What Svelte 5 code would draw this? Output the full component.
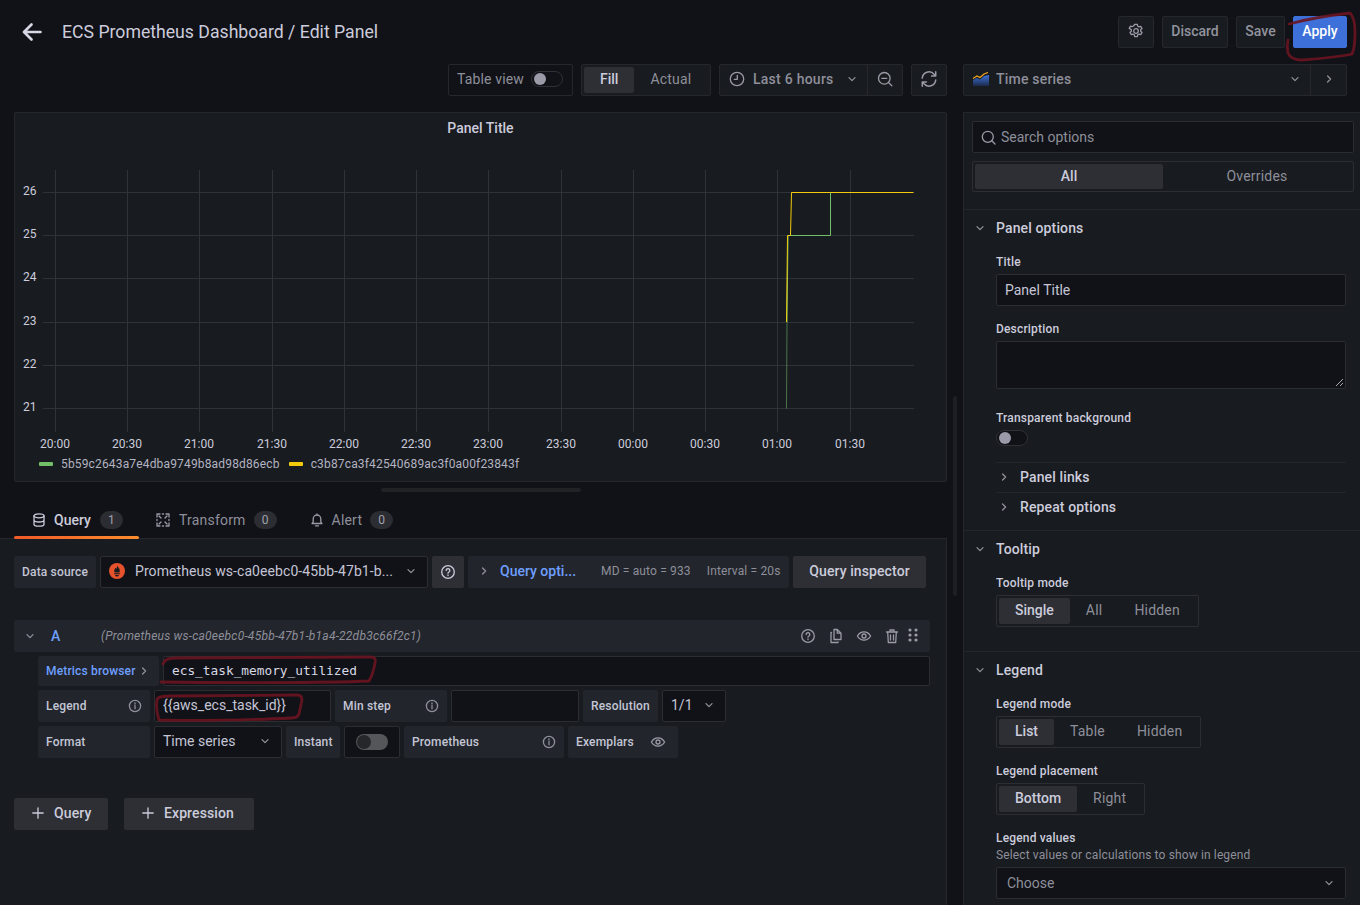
<script>
  const yTicks = [[26,192],[25,235],[24,278],[23,322],[22,365],[21,408]];
  const xTicks = [['20:00',55],['20:30',127],['21:00',199],['21:30',272],['22:00',344],['22:30',416],['23:00',488],['23:30',561],['00:00',633],['00:30',705],['01:00',777],['01:30',850]];
</script>

{#snippet down()}
  <svg class="ico chev" width="10" height="10" viewBox="0 0 10 10"><path d="M2 3.600 5 6.600l3-3" /></svg>
{/snippet}
{#snippet right()}
  <svg class="ico chev" width="10" height="10" viewBox="0 0 10 10"><path d="M3.600 2 6.600 5l-3 3" /></svg>
{/snippet}
{#snippet info()}
  <svg class="ico info" width="14" height="14" viewBox="0 0 14 14"><circle cx="7" cy="7" r="5.600"/><path d="M7 6.400v3.400M7 4v.9" /></svg>
{/snippet}
{#snippet help()}
  <svg class="ico" width="16" height="16" viewBox="0 0 16 16"><circle cx="8" cy="8" r="6.300"/><path d="M6.200 6.400a1.800 1.800 0 1 1 2.700 1.600c-.6.300-.9.700-.9 1.200M8 10.900v.7"/></svg>
{/snippet}
{#snippet eye(size)}
  <svg class="ico" width={size} height={size} viewBox="0 0 16 16"><path d="M1.400 8C3 5.300 5.300 3.900 8 3.900s5 1.400 6.600 4.100C13 10.700 10.700 12.100 8 12.100S3 10.700 1.400 8Z"/><circle cx="8" cy="8" r="2"/></svg>
{/snippet}
{#snippet refresh()}
  <svg class="ico" width="18" height="18" viewBox="0 0 16 16"><path d="M2 7.200A6 6 0 0 1 12.500 3.700L14 5.200M14 1.500v3.800h-3.700M14 8.800A6 6 0 0 1 3.500 12.300L2 10.800M2 14.500v-3.800h3.700"/></svg>
{/snippet}

<div class="page">
  <header class="top">
    <div class="title-wrap">
      <svg class="back" width="20" height="18" viewBox="0 0 20 18"><path d="M18.500 9H2.500M9.500 1.500 2 9l7.500 7.500" /></svg>
      <h1>ECS Prometheus Dashboard / Edit Panel</h1>
    </div>
    <div class="top-actions">
      <button class="tb square">
        <svg class="ico" width="16" height="16" viewBox="0 0 16 16"><circle cx="8" cy="8" r="2.300"/><path d="M6.700 1.400h2.600l.4 1.800 1.300.7 1.700-.6 1.300 2.300-1.300 1.200v1.400l1.300 1.200-1.300 2.300-1.700-.6-1.300.7-.4 1.800H6.700l-.4-1.800-1.300-.7-1.700.6-1.300-2.300 1.300-1.200V6.600L1.200 5.400l1.300-2.300 1.700.6 1.300-.7Z"/></svg>
      </button>
      <button class="tb discard">Discard</button>
      <button class="tb save">Save</button>
      <button class="tb apply">Apply</button>
    </div>
  </header>

  <div class="columns">
    <div class="left">
      <div class="toolbar">
        <div class="tool-box table-view">
          <span>Table view</span>
          <span class="switch"><i></i></span>
        </div>
        <div class="seg fill-seg">
          <span class="on">Fill</span><span>Actual</span>
        </div>
        <div class="tool-box time-box">
          <div class="time">
            <svg class="ico" width="16" height="16" viewBox="0 0 16 16"><circle cx="8" cy="8" r="6.700"/><path d="M8.300 4.300V8.300H5.300"/></svg>
            <span>Last 6 hours</span>
            {@render down()}
          </div>
          <div class="zoom">
            <svg class="ico" width="16" height="16" viewBox="0 0 16 16"><circle cx="7.300" cy="7.300" r="5.800"/><path d="M4.800 7.300h5M11.500 11.500l3.300 3.300"/></svg>
          </div>
        </div>
        <button class="tb square refresh">{@render refresh()}</button>
      </div>

      <section class="panel">
        <div class="panel-title">Panel Title</div>
        <svg class="chart" viewBox="15 145 931 311" width="931" height="311">
          {#each xTicks as [, x]}
            <line x1={x + .5} x2={x + .5} y1="170" y2="432" class="grid" />
          {/each}
          {#each yTicks as [, y]}
            <line x1="43" x2="914" y1={y + .5} y2={y + .5} class="grid" />
          {/each}
          {#each yTicks as [label, y]}
            <text x="23" y={y + 3}>{label}</text>
          {/each}
          {#each xTicks as [label, x]}
            <text x={x} y="448" text-anchor="middle">{label}</text>
          {/each}
          <path d="M786.500 408.500 787 322" class="s-green dim" />
          <path d="M787 322 788 235.500H830.500V192.500" class="s-green" />
          <path d="M786.500 322 787.500 235.500H790.500L791.500 192.500H913.500" class="s-yellow" />
        </svg>
        <div class="legend">
          <span class="mark green"></span><span class="series-name">5b59c2643a7e4dba9749b8ad98d86ecb</span>
          <span class="mark yellow"></span><span>c3b87ca3f42540689ac3f0a00f23843f</span>
        </div>
      </section>

      <div class="handle"></div>

      <nav class="tabs">
        <div class="tab active">
          <svg class="ico bright" width="14" height="14" viewBox="0 0 14 14"><ellipse cx="7" cy="2.800" rx="5" ry="2"/><path d="M2 2.800v8.400c0 1.100 2.200 2 5 2s5-.9 5-2V2.800M2 7c0 1.100 2.200 2 5 2s5-.9 5-2"/></svg>
          <b>Query</b><em>1</em>
        </div>
        <div class="tab transform">
          <svg class="ico" width="14" height="14" viewBox="0 0 14 14"><path d="M1 4V1h3M10 1h3v3M13 10v3h-3M4 13H1v-3M6.500 1h1M1 6.500v1M13 6.500v1M6.500 13h1M3 3l2 2M11 3 9 5M11 11 9 9M3 11l2-2"/></svg>
          <span>Transform</span><em>0</em>
        </div>
        <div class="tab alert">
          <svg class="ico" width="14" height="14" viewBox="0 0 14 14"><path d="M2 10.500h10l-1.200-1.700V5.800a3.800 3.800 0 0 0-7.600 0v3ZM5.500 12.800h3M7 1v1"/></svg>
          <span>Alert</span><em>0</em>
        </div>
      </nav>

      <section class="query-area">
        <div class="ds-row">
          <div class="lbl ds-label">Data source</div>
          <div class="field ds-select">
            <svg width="16" height="16" viewBox="0 0 16 16"><circle cx="8" cy="8" r="8" fill="#e6522c"/><path d="M8 2.500c.5 1.500 2.800 2.700 2.800 5.200 0 .7-.2 1.300-.5 1.800H5.700c-.3-.5-.5-1.100-.5-1.800 0-1.300 1-1.800 1.100-3 .6.300.9.800 1 1.300C7.800 5.200 8.200 3.900 8 2.500ZM5.200 10.300h5.600v1H5.200ZM6 12h4c-.2.900-1 1.500-2 1.500s-1.800-.6-2-1.500Z" fill="#181b1f"/></svg>
            <span class="ds-name">Prometheus ws-ca0eebc0-45bb-47b1-b...</span>
            {@render down()}
          </div>
          <button class="grey help-btn">{@render help()}</button>
          <div class="opts">
            {@render right()}
            <span class="opts-link">Query opti...</span>
            <span class="opts-meta md">MD = auto = 933</span>
            <span class="opts-meta">Interval = 20s</span>
          </div>
          <button class="grey inspector">Query inspector</button>
        </div>

        <div class="q-head">
          {@render down()}
          <span class="q-letter">A</span>
          <span class="q-ds">(Prometheus ws-ca0eebc0-45bb-47b1-b1a4-22db3c66f2c1)</span>
          <span class="q-icons">
            {@render help()}
            <svg class="ico" width="16" height="16" viewBox="0 0 16 16"><path d="M6 1.500h3.300L13 5.200v6.300H6ZM9.200 1.500v3.700H13M3.500 4.500H3v10h7v-.6"/></svg>
            {@render eye(16)}
            <svg class="ico" width="16" height="16" viewBox="0 0 16 16"><path d="M2.500 4h11M6 4V2h4v2M3.700 4l.6 10.500h7.400L12.300 4M6.500 7v5M9.500 7v5"/></svg>
            <svg class="dots" width="10" height="14" viewBox="0 0 10 14"><g fill="#9a9ba6"><circle cx="2" cy="2" r="1.600"/><circle cx="8" cy="2" r="1.600"/><circle cx="2" cy="7" r="1.600"/><circle cx="8" cy="7" r="1.600"/><circle cx="2" cy="12" r="1.600"/><circle cx="8" cy="12" r="1.600"/></g></svg>
          </span>
        </div>

        <div class="q-grid">
          <div class="line metric-line">
            <div class="lbl link w121">Metrics browser {@render right()}</div>
            <div class="field code">ecs_task_memory_utilized</div>
          </div>
          <div class="line legend-line">
            <div class="lbl w112 spread">Legend {@render info()}</div>
            <div class="field w177 plain">{'{{aws_ecs_task_id}}'}</div>
            <div class="lbl w112 spread">Min step {@render info()}</div>
            <div class="field w128"></div>
            <div class="lbl w75">Resolution</div>
            <div class="field w64 plain spread">1/1 {@render down()}</div>
          </div>
          <div class="line format-line">
            <div class="lbl w112">Format</div>
            <div class="field w128 plain spread">Time series {@render down()}</div>
            <div class="lbl w54">Instant</div>
            <div class="field w56 center"><span class="switch2"><i></i></span></div>
            <div class="lbl w160 spread">Prometheus {@render info()}</div>
            <div class="lbl w110 spread exemplars">Exemplars {@render eye(16)}</div>
          </div>
        </div>

        <div class="add-row">
          <button class="grey add add-q"><svg class="ico bright" width="12" height="12" viewBox="0 0 12 12"><path d="M6 .8v10.400M.8 6h10.400"/></svg>Query</button>
          <button class="grey add add-e"><svg class="ico bright" width="12" height="12" viewBox="0 0 12 12"><path d="M6 .8v10.400M.8 6h10.400"/></svg>Expression</button>
        </div>
      </section>
    </div>

    <div class="right">
      <div class="viz-row">
        <div class="viz">
          <svg width="18" height="14" viewBox="0 0 18 14"><defs><linearGradient id="vg" x1="0" y1="0" x2="0" y2="1"><stop offset="0" stop-color="#3d71d9"/><stop offset="1" stop-color="#1b2a4a"/></linearGradient></defs><path d="M1 8 5 6l3 1.500L12 4l5-1v11H1Z" fill="url(#vg)"/><path d="M1 6.500 5 4l3 1.500L12 2l4-1.500" fill="none" stroke="#f2a71e" stroke-width="1.200"/></svg>
          <span>Time series</span>
          {@render down()}
        </div>
        <div class="viz-next">{@render right()}</div>
      </div>

      <aside class="side">
        <div class="side-top">
          <div class="search">
            <svg class="ico" width="15" height="15" viewBox="0 0 15 15"><circle cx="6.800" cy="6.800" r="5.500"/><path d="m10.800 10.800 3.200 3.200"/></svg>
            <span>Search options</span>
          </div>
          <div class="seg all-seg"><span class="on">All</span><span>Overrides</span></div>
        </div>

        <div class="opt-section s-panel">
          <div class="sec-head">{@render down()}<span>Panel options</span></div>
          <div class="sec-body">
            <div class="f-label">Title</div>
            <div class="s-input">Panel Title</div>
            <div class="f-label l-desc">Description</div>
            <div class="s-area">
              <svg class="grip" width="9" height="9" viewBox="0 0 9 9"><path d="M1 8 8 1M5 8l3-3" stroke="#aaa" fill="none"/></svg>
            </div>
            <div class="f-label l-trans">Transparent background</div>
            <span class="switch side-switch"><i></i></span>
            <div class="sub first">{@render right()}<span>Panel links</span></div>
            <div class="sub">{@render right()}<span>Repeat options</span></div>
          </div>
        </div>

        <div class="opt-section s-tooltip">
          <div class="sec-head">{@render down()}<span>Tooltip</span></div>
          <div class="sec-body">
            <div class="f-label">Tooltip mode</div>
            <div class="seg side-seg"><span class="on">Single</span><span>All</span><span>Hidden</span></div>
          </div>
        </div>

        <div class="opt-section s-legend">
          <div class="sec-head">{@render down()}<span>Legend</span></div>
          <div class="sec-body">
            <div class="f-label">Legend mode</div>
            <div class="seg side-seg"><span class="on">List</span><span>Table</span><span>Hidden</span></div>
            <div class="f-label l-next">Legend placement</div>
            <div class="seg side-seg"><span class="on">Bottom</span><span>Right</span></div>
            <div class="f-label l-next">Legend values</div>
            <div class="f-desc">Select values or calculations to show in legend</div>
            <div class="s-input choose"><span>Choose</span>{@render down()}</div>
          </div>
        </div>
      </aside>
    </div>
  </div>

  <div class="scroll-thumb"></div>

  <svg class="ink" width="1360" height="905" viewBox="0 0 1360 905">
    <path d="M1289 24c18-5 44-9 61-11 3 3 5 10 5 19 0 10-1 18-3 22-14 3-36 5-50 6-7 0-12-2-14-7-1-4-1-9 0-13"/>
    <path d="M163 664c1-4 5-6 12-6l195-1c5 0 6 2 5 6-1 6-3 13-6 18-45 2-150 2-208 1"/>
    <path d="M157 700c0-3 6-4 14-4l126-1c4 0 5 2 5 5l-3 14c-1 3-4 4-8 4-35 2-100 3-132 2-2-6-3-14-2-20Z"/>
  </svg>
</div>

<style>
  :global(body) { margin: 0; background: #111217; }
  .page {
    position: relative;
    width: 1360px;
    height: 905px;
    overflow: hidden;
    background: #111217;
    color: #ccccdc;
    font-family: Roboto, "Liberation Sans", sans-serif;
    font-size: 14px;
  }
  button { font: inherit; cursor: pointer; }
  .ico { fill: none; stroke: #9a9ba6; stroke-width: 1.300; flex: none; stroke-linecap: round; stroke-linejoin: round; }
  .ico.bright { stroke: #ccccdc; }
  .chev { stroke: #8f909a; }
  .info { stroke: #8f909a; }

  .top { height: 64px; display: flex; justify-content: space-between; align-items: center; padding: 0 13px 0 22px; }
  .title-wrap { display: flex; align-items: center; gap: 20px; margin-top: -1px; }
  .back { fill: none; stroke: #d6d6e4; stroke-width: 2.600; stroke-linecap: round; stroke-linejoin: round; }
  h1 { margin: 0; font-size: 17.660px; font-weight: 400; color: #ccccdc; }
  .top-actions { display: flex; gap: 8px; }
  .tb {
    height: 32px; box-sizing: border-box; padding: 0 0 2px;
    background: #181b1f; border: 1px solid #25272c; border-radius: 2px;
    color: #92939e; font-weight: 500; font-size: 14px;
  }
  .tb.square { width: 36px; display: flex; align-items: center; justify-content: center; }
  .tb.discard { width: 66px; }
  .tb.save { width: 49px; letter-spacing: .1px; }
  .tb.apply { background: #3d71d9; border-color: #3d71d9; color: #fff; width: 54px; }

  .columns { display: grid; grid-template-columns: 947px 397px; column-gap: 16px; }
  .left { min-width: 0; }
  .toolbar { display: flex; justify-content: flex-end; gap: 8px; height: 32px; margin-bottom: 16px; }
  .tool-box { height: 32px; box-sizing: border-box; border: 1px solid #25272c; border-radius: 2px; display: flex; align-items: center; background: #111217; color: #8e8f9a; }
  .table-view { width: 125px; padding: 0 8px 2px; gap: 7px; letter-spacing: .15px; white-space: nowrap; }
  .switch { display: inline-block; position: relative; box-sizing: border-box; width: 32px; height: 16px; border: 1px solid #2f3136; border-radius: 8px; background: #111217; flex: none; }
  .switch i { position: absolute; left: 2px; top: 1px; width: 12px; height: 12px; border-radius: 50%; background: #9a9aa8; }
  .side-switch { display: block; }

  .seg { display: flex; box-sizing: border-box; height: 32px; padding: 2px; border: 1px solid #2c2e33; border-radius: 2px; }
  .seg span { display: flex; align-items: center; justify-content: center; padding: 0 16px 2px; color: #8e8f9a; white-space: nowrap; letter-spacing: .2px; }
  .seg span.on { background: #2d2f35; color: #ccccdc; font-weight: 500; border-radius: 2px; letter-spacing: 0; }
  .fill-seg { width: 130px; background: #181b1f; border-color: #25272c; }
  .time-box { width: 184px; background: #181b1f; font-weight: 500; letter-spacing: .25px; }
  .time { display: flex; align-items: center; width: 148px; box-sizing: border-box; padding: 0 0 2px 9px; height: 100%; border-right: 1px solid #25272c; gap: 8px; }
  .time .chev { margin-left: 5px; }
  .zoom { flex: 1; display: flex; align-items: center; justify-content: center; padding-bottom: 2px; }

  .panel { margin-left: 14px; height: 370px; box-sizing: border-box; background: #181b1f; border: 1px solid #24262b; border-radius: 2px; }
  .panel-title { height: 32px; display: flex; align-items: center; justify-content: center; font-weight: 500; font-size: 14px; box-sizing: border-box; padding-bottom: 2px; }
  .chart { display: block; }
  .chart text { fill: #ccccdc; font-size: 12px; font-family: Roboto, sans-serif; }
  .grid { stroke: #2f3236; stroke-width: 1; }
  .s-green { fill: none; stroke: #73bf69; stroke-width: 1; }
  .s-green.dim { opacity: .55; }
  .s-yellow { fill: none; stroke: #f2cc0c; stroke-width: 1; }
  .legend { display: flex; align-items: center; height: 14px; padding-left: 24px; font-size: 12px; color: #b3b3c2; margin-top: 1px; letter-spacing: .16px; }
  .mark { width: 14px; height: 4px; border-radius: 1px; margin-right: 8px; }
  .mark.green { background: #73bf69; }
  .mark.yellow { background: #f2cc0c; }
  .series-name { margin-right: 9px; }

  .handle { width: 200px; height: 4px; margin: 6px 0 0 381px; background: #202226; border-radius: 2px; }

  .tabs { height: 47px; display: flex; padding-left: 14px; box-sizing: border-box; border-bottom: 1px solid #25272c; }
  .tab { position: relative; display: flex; align-items: center; gap: 8px; padding: 10px 16px 0 17px; height: 46px; box-sizing: border-box; color: #8e8f9a; letter-spacing: .2px; }
  .tab b { color: #ccccdc; font-weight: 500; letter-spacing: 0; }
  .tab em { font-style: normal; font-size: 12px; display: flex; align-items: center; justify-content: center; width: 23px; height: 18px; border-radius: 9px; background: #2b2d32; color: #a0a1ab; margin-left: 1px; letter-spacing: 0; }
  .tab.transform { gap: 9px; }
  .tab.transform em { margin-left: -1px; }
  .tab.alert em { margin-left: 0; }
  .tab.active { width: 125px; padding-left: 18px; }
  .tab.active::after { content: ''; position: absolute; left: 0; right: 0; bottom: -1px; height: 3px; border-radius: 2px; background: linear-gradient(90deg, #f05a28, #fb8c2e); }

  .query-area { height: 366px; box-sizing: border-box; background: #181b1f; border-right: 1px solid #24262b; padding: 17px 16px 0 14px; }
  .ds-row { display: flex; gap: 4px; height: 32px; }
  .lbl { height: 100%; box-sizing: border-box; background: #22252b; border-radius: 2px; display: flex; align-items: center; padding: 0 8px; font-size: 12px; font-weight: 500; color: #c4c5d6; white-space: nowrap; letter-spacing: .17px; }
  .ds-label { width: 82px; }
  .field { height: 100%; box-sizing: border-box; background: #111217; border: 1px solid #2b2d32; border-radius: 2px; display: flex; align-items: center; white-space: nowrap; color: #ccccdc; }
  .ds-select { width: 328px; padding: 0 11px 2px 8px; gap: 10px; }
  .ds-name { flex: 1; color: #c4c5d6; letter-spacing: .08px; }
  .grey { background: #2d2f34; border: 0; border-radius: 2px; color: #ccccdc; font-weight: 500; font-size: 14px; display: flex; align-items: center; justify-content: center; padding: 0 0 2px; }
  .help-btn { width: 32px; height: 32px; padding: 0; }
  .help-btn .ico { stroke: #ccccdc; }
  .opts { width: 321px; background: #22252b; border-radius: 2px; display: flex; align-items: center; padding: 0 0 2px 11px; box-sizing: border-box; white-space: nowrap; }
  .opts-link { color: #6e9fff; font-weight: 500; margin-left: 11px; width: 76px; }
  .opts-meta { color: #8e8f9a; font-size: 12px; margin-left: 25px; letter-spacing: .15px; }
  .opts-meta.md { margin-right: -9px; }
  .inspector { width: 133px; height: 32px; letter-spacing: .1px; }

  .q-head { margin: 32px 0 4px; height: 32px; background: #22252b; border-radius: 2px; display: flex; align-items: center; padding-left: 11px; }
  .q-letter { color: #6e9fff; font-weight: 500; margin-left: 16px; width: 50px; }
  .q-ds { font-style: italic; font-size: 12px; color: #8e8f9a; flex: 1; letter-spacing: .22px; }
  .q-icons { display: flex; align-items: center; gap: 12px; padding-right: 12px; }
  .q-icons .dots { margin-left: -4px; margin-top: -2px; }

  .q-grid { margin-left: 24px; display: flex; flex-direction: column; gap: 4px; }
  .line { display: flex; gap: 4px; }
  .metric-line { height: 30px; }
  .legend-line { height: 32px; }
  .format-line { height: 32px; }
  .w121 { width: 121px; gap: 3px; }
  .link { color: #6e9fff; }
  .code { flex: 1; font-family: "DejaVu Sans Mono", monospace; font-size: 12.800px; padding: 0 0 1px 8px; color: #d8d8e4; }
  .spread { justify-content: space-between; }
  .w112 { width: 112px; }
  .w177 { width: 177px; }
  .w128 { width: 128px; }
  .w75 { width: 75px; }
  .w64 { width: 64px; }
  .w54 { width: 54px; }
  .w56 { width: 56px; }
  .w160 { width: 160px; }
  .w110 { width: 110px; }
  .exemplars { padding-right: 12px; }
  .plain { padding: 0 11px 2px 8px; font-size: 14px; color: #c4c5d6; }
  .center { justify-content: center; }
  .switch2 { position: relative; display: block; width: 32px; height: 16px; border-radius: 8px; background: #55565a; }
  .switch2 i { position: absolute; left: 1px; top: 1px; width: 14px; height: 14px; border-radius: 50%; background: #25272b; }

  .add-row { display: flex; gap: 16px; margin-top: 40px; }
  .add { height: 32px; gap: 10px; padding: 0 0 2px 18px; justify-content: flex-start; letter-spacing: .1px; }
  .add-q { width: 94px; }
  .add-e { width: 130px; }

  .viz-row { display: flex; height: 32px; margin-bottom: 16px; width: 384px; box-sizing: border-box; background: #181b1f; border: 1px solid #25272c; border-radius: 2px; }
  .viz { flex: 1; display: flex; align-items: center; padding: 0 10px 2px 8px; gap: 6px; color: #8e8f9a; font-weight: 500; border-right: 1px solid #25272c; letter-spacing: .2px; }
  .viz span { flex: 1; }
  .viz-next { width: 35px; display: flex; align-items: center; justify-content: center; padding-bottom: 2px; }

  .side { height: 793px; box-sizing: border-box; background: #181b1f; border: 1px solid #24262b; border-right: 0; border-bottom: 0; }
  .side-top { padding: 8px 6px 0 8px; }
  .search { height: 32px; box-sizing: border-box; background: #111217; border: 1px solid #2b2d32; border-radius: 2px; display: flex; align-items: center; padding: 0 8px; gap: 5px; color: #8e8f9a; }
  .all-seg { margin-top: 8px; height: 31px; }
  .all-seg span { flex: 1; padding: 0 0 1px; }
  .opt-section { border-top: 1px solid #24262b; box-sizing: border-box; }
  .s-panel { margin-top: 17px; height: 321px; }
  .s-tooltip { height: 121px; }
  .sec-head { display: flex; align-items: center; box-sizing: border-box; height: 36px; padding-left: 11px; gap: 11px; font-weight: 500; letter-spacing: .13px; }
  .s-panel .sec-head { height: 37px; padding-bottom: 2px; }
  .sec-body { padding: 9px 14px 0 32px; }
  .s-panel .sec-body { padding-top: 8px; }
  .f-label { font-size: 12px; font-weight: 500; line-height: 14px; margin-bottom: 5px; color: #ccccdc; letter-spacing: .18px; }
  .s-input { height: 32px; box-sizing: border-box; background: #111217; border: 1px solid #2b2d32; border-radius: 2px; display: flex; align-items: center; padding: 0 8px 1px; color: #c4c5d6; }
  .s-area { position: relative; height: 48px; box-sizing: border-box; background: #111217; border: 1px solid #2b2d32; border-radius: 2px; }
  .grip { position: absolute; right: 1px; bottom: 1px; }
  .l-desc { margin-top: 16px; }
  .l-trans { margin-top: 22px; }
  .sub { height: 30px; border-top: 1px solid #24262b; display: flex; align-items: center; gap: 11px; font-weight: 500; padding: 0 0 2px 3px; box-sizing: border-box; letter-spacing: .13px; }
  .sub.first { margin-top: 16px; }
  .side-seg { width: fit-content; }
  .l-next { margin-top: 16px; }
  .f-desc { font-size: 12px; color: #8e8f9a; line-height: 14px; margin-bottom: 5px; margin-top: -2px; letter-spacing: .13px; }
  .s-input.choose { justify-content: space-between; padding: 0 11px 1px 10px; color: #8e8f9a; }

  .scroll-thumb { position: absolute; left: 953px; top: 396px; width: 4px; height: 200px; border-radius: 2px; background: #1d1f24; }
  .ink { position: absolute; left: 0; top: 0; pointer-events: none; }
  .ink path { fill: none; stroke: #6a1520; stroke-width: 2.800; stroke-linecap: round; stroke-linejoin: round; opacity: .9; }
</style>
